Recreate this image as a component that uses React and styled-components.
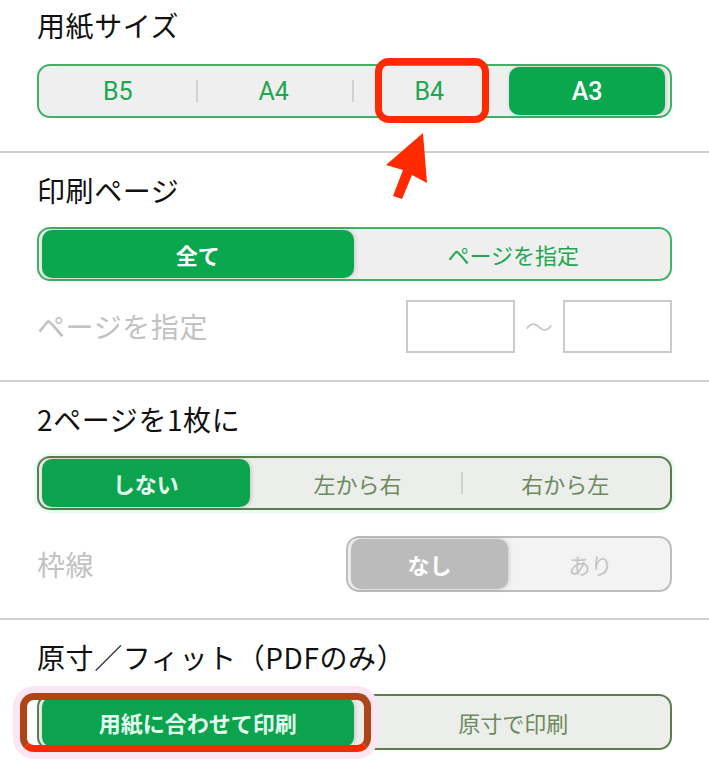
import React from 'react';
import styled, { createGlobalStyle, css } from 'styled-components';

const GlobalStyle = createGlobalStyle`
  html, body {
    margin: 0;
    padding: 0;
    background: #ffffff;
  }
  body {
    font-family: "Noto Sans CJK JP", "Noto Sans", sans-serif;
    color: #111111;
  }
`;

const tones = {
  green: { border: '#3db363', bg: '#efefef', text: '#22a650', pill: '#0aa74e', pillText: '#ffffff', line: '#d2d2d2' },
  olive: { border: '#5d7d4c', bg: '#eceeeb', text: '#6b8a5d', pill: '#0ba34d', pillText: '#e2fff0', line: '#d0d4cf' },
  gray: { border: '#bdbdbd', bg: '#f3f3f3', text: '#c4c4c4', pill: '#bbbbbb', pillText: '#ffffff', line: '#d6d6d6' },
};

const Page = styled.div`
  position: relative;
  width: 709px;
  min-height: 768px;
  overflow: hidden;
`;

const Section = styled.section`
  padding: ${(p) => (p.$first ? 9 : 21)}px 37px ${(p) => p.$bottom}px;
  border-top: ${(p) => (p.$first ? 'none' : '2px solid #d0d0d0')};
`;

const Title = styled.h2`
  margin: 0 0 ${(p) => p.$gap || 21}px;
  font-size: 28px;
  line-height: 32px;
  font-weight: 400;
  color: #111111;
  letter-spacing: 0.6px;
`;

const Control = styled.div`
  position: relative;
  display: flex;
  box-sizing: border-box;
  height: ${(p) => p.$height}px;
  width: ${(p) => (p.$width ? p.$width + 'px' : 'auto')};
  border: 2px solid ${(p) => p.$tone.border};
  border-radius: 13px;
  background: ${(p) => p.$tone.bg};
  padding: 1px;
  ${(p) =>
    p.$glow &&
    css`
      box-shadow: 0 0 0 3px ${p.$glow};
    `}
`;

const Segment = styled.div`
  position: relative;
  flex: 1;
  display: flex;
  align-items: center;
  justify-content: center;
  border-radius: 10px;
  font-family: Roboto, "Noto Sans CJK JP", sans-serif;
  font-size: ${(p) => p.$size}px;
  color: ${(p) => p.$tone.text};

  ${(p) =>
    p.$active &&
    css`
      margin: 0 4px 0 2px;
      background: ${p.$tone.pill};
      color: ${p.$tone.pillText};
      font-weight: ${p.$weight};
      box-shadow: 1px 0 4px rgba(0, 0, 0, 0.18);
    `}

  ${(p) =>
    p.$divider &&
    css`
      &::before {
        content: '';
        position: absolute;
        left: 0;
        top: 28%;
        bottom: 28%;
        width: 2px;
        background: ${p.$tone.line};
      }
    `}
`;

const Highlight = styled.div`
  position: absolute;
  box-sizing: border-box;
  left: ${(p) => p.$left}px;
  top: ${(p) => p.$top}px;
  width: ${(p) => p.$width}px;
  height: ${(p) => p.$height}px;
  border: ${(p) => p.$border}px solid ${(p) => p.$color};
  border-bottom-color: ${(p) => p.$bottomColor || p.$color};
  border-radius: 14px;
  pointer-events: none;
  ${(p) =>
    p.$halo &&
    css`
      box-shadow: 0 0 0 7px ${p.$halo};
    `}
`;

const Row = styled.div`
  display: flex;
  align-items: center;
  justify-content: space-between;
  height: 56px;
  margin-top: ${(p) => p.$gap}px;
`;

const MutedLabel = styled.span`
  font-size: 28px;
  color: #c2c2c2;
  letter-spacing: 0.6px;
`;

const Range = styled.div`
  display: flex;
  align-items: center;
`;

const InputBox = styled.div`
  width: 109px;
  height: 53px;
  box-sizing: border-box;
  border: 2px solid #cbcbcb;
  background: #ffffff;
`;

const Tilde = styled.span`
  width: 48px;
  text-align: center;
  font-size: 28px;
  font-weight: 300;
  color: #c2c2c2;
`;

const ArrowMark = styled.svg`
  position: absolute;
  left: 380px;
  top: 128px;
  width: 55px;
  height: 75px;
`;

function Segmented({ items, active, tone = tones.green, height = 54, width, glow, size = 22, weight = 700, children }) {
  return (
    <Control $tone={tone} $height={height} $width={width} $glow={glow}>
      {items.map((label, i) => (
        <Segment
          key={label}
          $tone={tone}
          $size={size}
          $weight={weight}
          $active={i === active}
          $divider={i > 0 && i !== active && i - 1 !== active}
        >
          {label}
        </Segment>
      ))}
      {children}
    </Control>
  );
}

export default function App() {
  return (
    <Page>
      <GlobalStyle />

      <Section $first $bottom={33}>
        <Title $gap={23}>用紙サイズ</Title>
        <Segmented items={['B5', 'A4', 'B4', 'A3']} active={3} size={25} weight={500}>
          <Highlight $left={336} $top={-8} $width={114} $height={65} $border={7} $color="#ff2a00" />
        </Segmented>
      </Section>

      <Section $bottom={26}>
        <Title>印刷ページ</Title>
        <Segmented items={['全て', 'ページを指定']} active={0} />
        <Row $gap={17}>
          <MutedLabel>ページを指定</MutedLabel>
          <Range>
            <InputBox />
            <Tilde>～</Tilde>
            <InputBox />
          </Range>
        </Row>
      </Section>

      <Section $bottom={26}>
        <Title>2ページを1枚に</Title>
        <Segmented items={['しない', '左から右', '右から左']} active={0} tone={tones.olive} glow="#e8fbf5" />
        <Row $gap={26}>
          <MutedLabel>枠線</MutedLabel>
          <Segmented items={['なし', 'あり']} active={0} tone={tones.gray} height={56} width={326} />
        </Row>
      </Section>

      <Section $bottom={16}>
        <Title>原寸／フィット（PDFのみ）</Title>
        <Segmented items={['用紙に合わせて印刷', '原寸で印刷']} active={0} tone={tones.olive} height={56}>
          <Highlight
            $left={-19}
            $top={-3}
            $width={351}
            $height={59}
            $border={7}
            $color="#ad4517"
            $bottomColor="#f42a00"
            $halo="#fde6f3"
          />
        </Segmented>
      </Section>

      <ArrowMark viewBox="0 0 55 75">
        <polygon points="43,5 47,55 32,47 22,71 13,68 23,42 6,37" fill="#ff2a00" />
      </ArrowMark>
    </Page>
  );
}
